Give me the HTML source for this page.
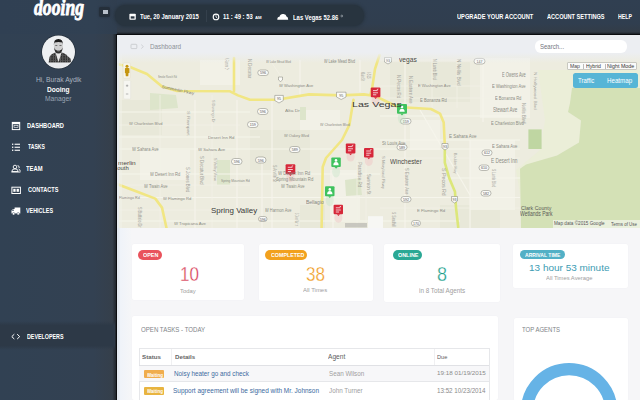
<!DOCTYPE html>
<html><head><meta charset="utf-8"><style>
*{margin:0;padding:0;box-sizing:border-box}
html,body{width:640px;height:400px;overflow:hidden}
body{position:relative;background:#314052;font-family:"Liberation Sans",sans-serif}
.a{position:absolute}
.t{position:absolute;line-height:1;white-space:pre;transform-origin:0 0}

.card{position:absolute;background:#fff;border-radius:2px;box-shadow:0 0 1px 0 #ebebef}
.bd{position:absolute;border-radius:5px;height:9.4px}

</style></head><body>

<!-- header -->
<div class="a" style="left:0;top:0;width:640px;height:400px;background:#303f51"></div>
<div class="a" style="left:0;top:0;width:640px;height:34px;background:linear-gradient(#303f51 0%,#303e4f 70%,#333c47 94%,#1a1e24 100%)"></div>
<div class="a" style="left:0;top:0;width:117px;height:400px;background:linear-gradient(90deg,#314153 0%,#334152 80%,#353f4b 96%,#1a1e24 100%)"></div>
<div class="a" style="left:0;top:0;width:117px;height:34px;background:linear-gradient(90deg,#304053 0%,#314153 80%,#303e4f 100%)"></div>
<div class="a" style="left:115px;top:5px;width:249px;height:21px;background:#28343f;border-radius:10.5px;box-shadow:0 0 3px 1px #28343f"></div>
<div class="a" style="left:206px;top:10px;width:1px;height:12px;background:#34404c"></div>
<div class="a" style="left:99px;top:7px;width:11px;height:10px;background:#252f3a;border-radius:2px;box-shadow:0 0 2px #252f3a"></div>
<div class="a" style="left:102.5px;top:9.5px;width:5.5px;height:4.5px;background:#b8c0ca"></div>
<!-- sidebar -->
<div class="a" style="left:0;top:321px;width:115px;height:29px;background:linear-gradient(rgba(44,56,70,0) 0%,#2d3947 15%,#2d3947 85%,rgba(44,56,70,0) 100%)"></div>
<!-- main -->
<div class="a" style="left:116px;top:34px;width:524px;height:366px;background:#0b0d10"></div>
<div class="a" style="left:117px;top:35px;width:523px;height:365px;background:#f3f4f6"></div>
<div class="a" style="left:117px;top:35px;width:2px;height:365px;background:#e4e9f0"></div>

<svg class="a" style="left:117px;top:35px" width="523" height="193" viewBox="117 35 523 193">
 <rect x="117" y="35" width="523" height="193" fill="#edecdf"/>
 <!-- lighter/darker urban blocks -->
 <g fill="#e8e8d9">
  <rect x="117" y="100" width="45" height="35"/>
  <rect x="250" y="130" width="60" height="40"/>
  <rect x="390" y="62" width="80" height="40"/>
  <rect x="300" y="205" width="25" height="23"/>
  <rect x="440" y="205" width="60" height="23"/>
 </g>
 <g fill="#f2f1e7">
  <rect x="200" y="60" width="40" height="25"/>
  <rect x="330" y="170" width="30" height="50"/>
  <rect x="470" y="140" width="45" height="70"/>
  <rect x="480" y="58" width="50" height="60"/>
  <rect x="140" y="150" width="50" height="30"/>
  <rect x="300" y="110" width="40" height="20"/>
  <rect x="410" y="120" width="30" height="30"/>
 </g>
 <!-- golf / parks -->
 <g fill="#dde5cb">
  <path d="M150,93 L176,95 L178,108 L150,110 Z"/>
  <path d="M300,107 L306,107 L306,120 L300,120 Z"/>
  <path d="M217,160 L230,160 L230,185 L217,185 Z"/>
  <path d="M345,180 L360,178 L362,195 L346,196 Z"/>
 </g>
 <!-- cream transition band -->
 <path d="M538,70 L640,70 L640,88 L572,88 L570,103 L568,112 L581,120.6 L579,142.5 L557,155.6 L526,164.4 L519.7,168.7 L521,200 L516,170 L540,150 L545,120 Z" fill="#ebeed8"/>
 <!-- green park -->
 <path d="M572,88 L640,88 L640,228 L521,228 L520,168.7 L526,164.4 L557,155.6 L579,142.5 L581,120.6 L568,112 L570,103 Z" fill="#d4e1b6"/>
 <rect x="528.4" y="129.4" width="13.2" height="19.6" fill="#bfd6a2"/>
 <!-- minor roads -->
 <g stroke="#f6f5ec" stroke-width="1.1" fill="none">
  <path d="M117,149 L520,149"/>
  <path d="M117,197.5 L520,197.5"/>
  <path d="M117,221 L460,221"/>
  <path d="M117,137 L260,137"/>
  <path d="M262,160 L262,228"/>
  <path d="M333,170 L333,228"/>
  <path d="M483,60 L483,122"/>
  <path d="M237,100 L237,228"/>
  <path d="M272,100 L272,228"/>
  <path d="M195,100 L195,228"/>
  <path d="M380,116 L520,116"/>
  <path d="M380,140 L520,140"/>
  <path d="M440,178 L520,178"/>
  <path d="M420,110 L470,195"/>
  <path d="M405,60 L405,228"/>
  <path d="M470,140 L470,228"/>
  <path d="M117,174 L380,174"/>
  <path d="M300,60 L300,95"/>
  <path d="M360,60 L360,92"/>
  <path d="M117,112 L250,112"/>
 </g>
 <g stroke="#f3f2e8" stroke-width="0.7" fill="none">
  <path d="M117,125 L240,125"/><path d="M117,185 L250,185"/><path d="M380,86 L520,86"/><path d="M380,98 L520,98"/>
  <path d="M380,158 L520,158"/><path d="M380,208 L520,208"/><path d="M160,95 L160,228"/><path d="M212,95 L212,228"/>
  <path d="M357,160 L357,228"/><path d="M366,160 L366,228"/><path d="M432,58 L432,108"/><path d="M457,58 L457,108"/>
  <path d="M270,60 L290,90"/><path d="M380,60 L520,60"/><path d="M117,210 L250,210"/>
 </g>
 <!-- highways -->
 <g stroke="#f1e683" stroke-width="2.6" fill="none" stroke-linejoin="round" stroke-linecap="round">
  <path d="M117,64 L130,67 L147,74 L162,86.5 L177,91 L230,91.3 L238,95.4 L250,99.7 L277,99.7 L309,94.4 L341,95.4 L364,94.4 L375,96 L398,107 L431,109 L440,113.6 L443.7,122.6 L444.8,145"/>
  <path d="M234,58 L234,91"/>
  <path d="M379.5,55 L375,69 L372.4,86.5 L370.6,94"/>
  <path d="M353.5,99.7 L349.3,125.2 L342,140 L326,158 L322.7,167 L321.6,228"/>
  <path d="M117,184 L137.3,191.8 L155.3,198.6 L162,207.6 L166.5,228"/>
 </g>
 <path d="M444.8,145 L444.8,162.5 L449.3,178.3 L455,191.8 L456,207.6 L458.3,228" stroke="#dce77a" stroke-width="2.6" fill="none"/>
 <!-- shields -->
 <g fill="#fbfbf8" stroke="#6f6f68" stroke-width="0.45">
  <rect x="257.5" y="108.5" width="10.5" height="6" rx="3"/>
  <rect x="247.5" y="121.5" width="10.5" height="6" rx="3"/>
  <rect x="289.5" y="146.5" width="10.5" height="6" rx="3"/>
  <rect x="231.5" y="158.5" width="10.5" height="6" rx="3"/>
  <rect x="255.5" y="157" width="10.5" height="6" rx="3"/>
  <rect x="258.5" y="216.5" width="8.5" height="5" rx="2.5"/>
  <rect x="474" y="58.4" width="11" height="5.6" rx="2.8"/>
  <rect x="400.5" y="118.5" width="10.5" height="5.5" rx="2.7"/>
  <rect x="397" y="144.5" width="10" height="5.5" rx="2.7"/>
  <rect x="479" y="165" width="10" height="5.5" rx="2.7"/>
  <rect x="401" y="196.5" width="10" height="5.5" rx="2.7"/>
  <rect x="481" y="190.5" width="10" height="5.5" rx="2.7"/>
  <rect x="411.5" y="220.5" width="9" height="5.5" rx="2.7"/>
  <rect x="257.8" y="70" width="10.6" height="5.5" rx="2.7"/>
  <rect x="482" y="150" width="10" height="5.5" rx="2.7"/>
  <path d="M274.8,95.4 L283.3,95.4 L283.3,100.5 L279,103 L274.8,100.5 Z"/>
  <path d="M336.5,92.2 L346,92.2 L346,97 L341.2,99.5 L336.5,97 Z"/>
  <path d="M384.5,57.5 L391.5,57.5 L391.5,62 L388,64 L384.5,62 Z"/>
  <path d="M442,143.5 L448,143.5 L448,148 L445,150 L442,148 Z"/>
  <path d="M451.5,196.5 L457.5,196.5 L457.5,201 L454.5,203 L451.5,201 Z"/>
  <path d="M278.5,77 L282.5,77 L282.5,80 L280.5,81.5 L278.5,80 Z"/>
 </g>
 <g fill="#555" font-family="Liberation Sans" font-size="3.6" text-anchor="middle">
  <text x="262.8" y="113">596</text><text x="252.8" y="126">159</text><text x="294.8" y="151">589</text>
  <text x="236.8" y="163">596</text><text x="260.8" y="161.5">596</text><text x="262.8" y="220.5">596</text>
  <text x="479.5" y="62.8">147</text><text x="405.8" y="122.8">159</text><text x="402" y="148.8">589</text>
  <text x="484" y="169.3">610</text><text x="406" y="200.8">592</text><text x="486" y="194.8">582</text><text x="416" y="224.8">170</text>
  <text x="263" y="74.3">596</text><text x="487" y="154.3">612</text>
  <text x="279" y="100">95</text><text x="341.2" y="97">95</text><text x="388" y="61.5">93</text><text x="445" y="147.5">93</text><text x="454.5" y="200.5">93</text>
 </g>
 <!-- attribution strip -->
 <rect x="553" y="220" width="87" height="8" fill="#f4f6ee" opacity="0.7"/>
 <rect x="345" y="223" width="22" height="4.5" fill="#b8b8b0" opacity="0.7"/>
 <rect x="368" y="216.2" width="15" height="12" fill="#f7f7f4"/>
 <!-- pegman + zoom -->
 <rect x="117" y="35" width="5" height="193" fill="#f2f2ea" opacity="0.5"/>
 <rect x="123.2" y="63" width="7.1" height="15.2" rx="1" fill="#f7f5ea" stroke="#dedac6" stroke-width="0.4"/>
 <circle cx="127" cy="66.2" r="1.5" fill="#c4950f"/>
 <path d="M124.9,68.3 Q127,67.3 129.4,68.3 L129.4,73 L128.5,73 L128.3,76.2 L125.8,76.2 L125.5,73 L124.9,73 Z" fill="#c4950f"/>
 <rect x="123.6" y="80.5" width="7" height="18.5" rx="1" fill="#f6f6f1" stroke="#e0e0d6" stroke-width="0.4"/>
 <path d="M125.9,85.7 L128.3,85.7 M125.9,94 L128.3,94" stroke="#8c8c8c" stroke-width="0.6"/>
 <path d="M127.1,84.5 L127.1,86.9" stroke="#8c8c8c" stroke-width="0.6"/>
 <!-- halos -->
 <g opacity="0.35">
  <ellipse cx="375.6" cy="100.6" rx="4" ry="5" fill="#f0b8bc"/>
  <ellipse cx="350.6" cy="156.6" rx="4" ry="5" fill="#f0b8bc"/>
  <ellipse cx="368.8" cy="161" rx="4" ry="5" fill="#f0b8bc"/>
  <ellipse cx="290.40000000000003" cy="177.3" rx="4" ry="5" fill="#f0b8bc"/>
  <ellipse cx="338.40000000000003" cy="217.8" rx="4" ry="5" fill="#f0b8bc"/>
  <ellipse cx="401.8" cy="118" rx="4" ry="6" fill="#bfe3c4"/>
  <ellipse cx="336.1" cy="171.5" rx="4" ry="6" fill="#bfe3c4"/>
  <ellipse cx="329.8" cy="200.3" rx="4" ry="6" fill="#bfe3c4"/>
 </g>
 <!-- markers -->
 <g>
  <rect x="370.8" y="87.6" width="9.6" height="9.6" rx="1" fill="#d6283a"/>
  <rect x="345.8" y="143.6" width="9.6" height="9.9" rx="1" fill="#d6283a"/>
  <rect x="364" y="148" width="9.5" height="9.5" rx="1" fill="#d6283a"/>
  <rect x="285.6" y="164.3" width="9.7" height="10" rx="1" fill="#d6283a"/>
  <rect x="333.6" y="204.8" width="9.4" height="9.5" rx="1" fill="#d6283a"/>
  <rect x="397" y="104" width="10" height="9.7" rx="1" fill="#3fc25e"/>
  <rect x="331.3" y="157.5" width="9.5" height="9.5" rx="1" fill="#3fc25e"/>
  <rect x="325" y="186.3" width="9.5" height="10" rx="1" fill="#3fc25e"/>
 </g>
 <g fill="#d6283a">
  <path d="M374,97.2 L375.6,99 L377.2,97.2 Z"/><path d="M349,153.5 L350.6,155.3 L352.2,153.5 Z"/>
  <path d="M367.2,157.5 L368.8,159.3 L370.4,157.5 Z"/><path d="M288.8,174.3 L290.4,176 L292,174.3 Z"/>
  <path d="M336.8,214.3 L338.4,216 L340,214.3 Z"/>
 </g>
 <g fill="#3fc25e">
  <path d="M400.4,113.7 L402,115.5 L403.6,113.7 Z"/><path d="M334.5,167 L336.1,168.8 L337.7,167 Z"/><path d="M328.2,196.3 L329.8,198 L331.4,196.3 Z"/>
 </g>
 <g fill="none" stroke="#fff" stroke-width="0.75">
  <path d="M373.0,90.6 L377.6,90.6 M373.0,92.8 L378.0,92.8 M373.0,94.8 L376.3,94.8 M376.8,89.6 L378.3,89.1"/>
  <path d="M348.0,146.6 L352.6,146.6 M348.0,148.79999999999998 L353.0,148.79999999999998 M348.0,150.79999999999998 L351.3,150.79999999999998 M351.8,145.6 L353.3,145.1"/>
  <path d="M366.2,151 L370.8,151 M366.2,153.2 L371.2,153.2 M366.2,155.2 L369.5,155.2 M370,150 L371.5,149.5"/>
  <path d="M287.8,167.3 L292.40000000000003,167.3 M287.8,169.5 L292.8,169.5 M287.8,171.5 L291.1,171.5 M291.6,166.3 L293.1,165.8"/>
  <path d="M335.8,207.8 L340.40000000000003,207.8 M335.8,210.0 L340.8,210.0 M335.8,212.0 L339.1,212.0 M339.6,206.8 L341.1,206.3"/>
 </g>
 <g fill="#fff">
  <circle cx="402" cy="107" r="1.3"/><path d="M399.3,111.8 Q399.5,108.7 402,108.7 Q404.5,108.7 404.7,111.8 Z"/>
  <circle cx="336" cy="160.4" r="1.3"/><path d="M333.3,165.2 Q333.5,162.1 336,162.1 Q338.5,162.1 338.7,165.2 Z"/>
  <circle cx="329.8" cy="189.4" r="1.3"/><path d="M327.1,194.2 Q327.3,191.1 329.8,191.1 Q332.3,191.1 332.5,194.2 Z"/>
 </g>
 <!-- breadcrumb fade -->
 <defs><linearGradient id="bf" x1="0" y1="0" x2="0" y2="1"><stop offset="0" stop-color="#eceef2"/><stop offset="0.62" stop-color="#eceef2"/><stop offset="1" stop-color="#eceef2" stop-opacity="0"/></linearGradient></defs>
 <rect x="117" y="35" width="523" height="28" fill="url(#bf)"/>
</svg>
<!-- breadcrumb -->
<div class="a" style="left:117px;top:35px;width:1.5px;height:193px;background:#e6ebf1;opacity:0.8"></div>
<svg class="a" style="left:0;top:0" width="640" height="100">
 <rect x="131" y="44.3" width="5.8" height="4.3" rx="0.7" fill="none" stroke="#c4c6ca" stroke-width="0.8"/>
 <path d="M141.2,44.6 L143.4,46.6 L141.2,48.6" fill="none" stroke="#c4c6ca" stroke-width="0.7"/>
</svg>
<div class="a" style="left:535px;top:40.3px;width:92px;height:12.6px;background:#fff;border-radius:6px"></div>
<!-- map controls -->
<div class="a" style="left:567px;top:62px;width:69.5px;height:7.8px;background:#fbfbfa;border:0.6px solid #c8c8c0;border-radius:1px"></div>
<div class="a" style="left:582.5px;top:63.5px;width:0.6px;height:5px;background:#bbb"></div>
<div class="a" style="left:604.5px;top:63.5px;width:0.6px;height:5px;background:#bbb"></div>
<div class="a" style="left:573.1px;top:72.5px;width:65px;height:15.2px;background:#56b5d6;border-radius:2.5px"></div>
<!-- cards -->
<div class="a" style="left:117px;top:228px;width:523px;height:172px;background:#f6f6f8"></div>
<div class="a" style="left:117px;top:228px;width:14px;height:172px;background:linear-gradient(90deg,#e3e9f1 0,#e3e9f1 2px,#eff3f9 3px,#f5f6f8 100%)"></div>
<div class="card" style="left:132px;top:243.5px;width:111.75px;height:56.5px"></div>
<div class="card" style="left:258.75px;top:243.5px;width:113.75px;height:57.5px"></div>
<div class="card" style="left:383.75px;top:243.5px;width:116.25px;height:58px"></div>
<div class="card" style="left:513px;top:244px;width:115px;height:44px"></div>
<div class="bd" style="left:138px;top:250.2px;width:24.1px;background:#e9525c"></div>
<div class="bd" style="left:265.4px;top:250.2px;width:42px;background:#f2a11e"></div>
<div class="bd" style="left:392.9px;top:250.3px;width:29.6px;background:#2aa895"></div>
<div class="bd" style="left:520px;top:250px;width:45px;background:#52b0c6"></div>
<!-- panels -->
<div class="card" style="left:132px;top:316px;width:365.5px;height:84px"></div>
<div class="card" style="left:513.5px;top:317.5px;width:114px;height:83px"></div>
<div class="a" style="left:138.6px;top:348.4px;width:351.6px;height:52px;border:0.7px solid #e6e7ea;border-bottom:none"></div>
<div class="a" style="left:139.4px;top:365.3px;width:350px;height:0.8px;background:#e0e1e5"></div>
<div class="a" style="left:139.4px;top:366px;width:350px;height:15px;background:#f7f7f9"></div>
<div class="a" style="left:139.4px;top:381px;width:350px;height:0.8px;background:#e6e7ea"></div>
<div class="a" style="left:170.5px;top:349px;width:0.7px;height:16px;background:#f0f0f2"></div>
<div class="a" style="left:433.5px;top:349px;width:0.7px;height:16px;background:#f0f0f2"></div>
<div class="a" style="left:143.9px;top:370.3px;width:20.6px;height:7.9px;background:#f0ad4e;border-radius:1px"></div>
<div class="a" style="left:143.9px;top:387.2px;width:20.6px;height:7.5px;background:#e8b440;border-radius:1px"></div>
<svg class="a" style="left:0;top:300px" width="640" height="100" viewBox="0 300 640 100">
 <circle cx="569.1" cy="411.35" r="42.15" fill="none" stroke="#66b3e6" stroke-width="12.2"/>
</svg>

<svg class="a" style="left:0;top:0" width="640" height="400" viewBox="0 0 640 400">
 <!-- avatar -->
 <circle cx="58.5" cy="52" r="17.3" fill="#26313d"/>
 <circle cx="58.5" cy="52" r="16.5" fill="#eceef0"/>
 <clipPath id="av"><circle cx="58.5" cy="52" r="15.8"/></clipPath>
 <g clip-path="url(#av)">
  <rect x="40" y="35" width="40" height="34" fill="#eef0f2"/>
  <pattern id="plaid" width="2.4" height="2.4" patternUnits="userSpaceOnUse"><rect width="2.4" height="2.4" fill="#2b2b2b"/><rect x="0" y="0" width="0.9" height="2.4" fill="#6a6a6a"/><rect x="0" y="0" width="2.4" height="0.7" fill="#555"/></pattern>
  <path d="M48.5,63 L49.5,57 Q51,53.5 55.5,52.5 L61.5,52.5 Q66,53.5 67.5,56 L70.5,58.5 L71.5,63 Z" fill="url(#plaid)"/>
  <path d="M55.5,52.8 L58.5,62 L61.5,52.8 Z" fill="#e6e6e6"/>
  <ellipse cx="58.4" cy="46.6" rx="4.5" ry="6" fill="#cfcfcf"/>
  <path d="M53.8,45 Q53.6,38.8 58.4,38.9 Q63.2,38.8 63,45 L62.3,42.6 Q58.4,41.6 54.5,42.6 Z" fill="#1e1e1e"/>
  <path d="M54.1,47.2 Q54.5,53.6 58.4,53.6 Q62.3,53.6 62.7,47.2 L61.7,49.6 Q58.4,51.6 55.1,49.6 Z" fill="#2e2e2e"/>
  <rect x="55.3" y="45.2" width="2" height="0.8" fill="#555"/><rect x="59.5" y="45.2" width="2" height="0.8" fill="#555"/>
  <path d="M56.8,50.6 Q58.4,51.4 60,50.6" stroke="#ddd" stroke-width="0.5" fill="none"/>
  <rect x="40" y="62.5" width="40" height="8" fill="#e9ebee"/>
 </g>
 <!-- header icons -->
 <rect x="129.4" y="13.8" width="6.4" height="6" rx="0.8" fill="#fff"/>
 <rect x="130.7" y="16.3" width="3.8" height="2.3" fill="#2a3541"/>
 <circle cx="216" cy="16.9" r="2.8" fill="none" stroke="#fff" stroke-width="1.1"/>
 <path d="M216,15.2 L216,17 L217.3,18" fill="none" stroke="#fff" stroke-width="0.8"/>
 <path d="M277.3,19.8 Q277.2,17 279.5,16.8 Q280.3,13.6 283.5,14 Q286.2,14.3 286.5,16.6 Q288.3,16.9 288.2,19.8 Z" fill="#fff"/>
 <circle cx="341.8" cy="16" r="0.9" fill="none" stroke="#cfd4da" stroke-width="0.5"/>
 <!-- sidebar icons -->
 <g fill="none" stroke="#fff" stroke-width="1">
  <rect x="12.3" y="122.4" width="7.4" height="7.2"/>
  <rect x="14" y="125.6" width="4" height="2" stroke-width="0.6"/>
 </g>
 <rect x="12" y="122" width="8" height="2.2" fill="#fff"/>
 <g fill="#fff">
  <rect x="12" y="143.6" width="1.3" height="1.3"/><rect x="14.6" y="143.7" width="5.4" height="1.1"/>
  <rect x="12" y="146.6" width="1.3" height="1.3"/><rect x="14.6" y="146.7" width="5.4" height="1.1"/>
  <rect x="12" y="149.6" width="1.3" height="1.3"/><rect x="14.6" y="149.7" width="5.4" height="1.1"/>
 </g>
 <g fill="none" stroke="#fff" stroke-width="0.9">
  <circle cx="15" cy="167" r="1.8"/>
  <path d="M11.8,171.5 Q12,168.8 15,168.8 Q18,168.8 18.2,171.5 Z"/>
  <path d="M17.6,165.6 Q19.6,165.8 19.2,168 M18.6,169 Q20.2,169.4 20.3,171.5"/>
 </g>
 <rect x="11.4" y="171.6" width="9" height="0.9" fill="#fff"/>
 <rect x="11.9" y="187.2" width="8.5" height="6.3" fill="none" stroke="#fff" stroke-width="1"/>
 <g fill="#fff"><rect x="13.3" y="188.8" width="2.3" height="3"/><rect x="16.6" y="188.8" width="2.3" height="3"/></g>
 <path d="M11.5,213.6 L11.5,210.6 L12.8,208.9 L14.6,208.9 L14.6,207.6 L20.3,207.6 L20.3,213.6 Z" fill="#fff"/>
 <circle cx="13.6" cy="213.8" r="1.25" fill="#fff" stroke="#314154" stroke-width="0.5"/><circle cx="18.2" cy="213.8" r="1.25" fill="#fff" stroke="#314154" stroke-width="0.5"/>
 <rect x="12.2" y="209.6" width="1.6" height="1.2" fill="#314154"/>
 <path d="M14.3,334.2 L11.8,336.6 L14.3,339 M17.2,334.2 L19.7,336.6 L17.2,339" fill="none" stroke="#fff" stroke-width="1"/>
</svg>

<div id="t0" class="t" style="left:33.62px;top:-3.68px;font-size:23.11px;color:#fff;font-weight:bold;font-family:'Liberation Serif',serif;font-style:italic;transform:scaleX(0.764);-webkit-text-stroke:0.9px #fff;">dooing</div>
<div id="t1" class="t" style="left:139.72px;top:13.86px;font-size:6.81px;color:#fff;font-weight:bold;transform:scaleX(0.867);">Tue, 20 January 2015</div>
<div id="t2" class="t" style="left:222.78px;top:13.30px;font-size:7.32px;color:#fff;font-weight:bold;transform:scaleX(0.802);">11 : 49 : 53</div>
<div id="t3" class="t" style="left:254.86px;top:15.93px;font-size:4.10px;color:#fff;font-weight:bold;transform:scaleX(1.051);">AM</div>
<div id="t4" class="t" style="left:293.10px;top:13.71px;font-size:7.03px;color:#fff;font-weight:bold;transform:scaleX(0.841);">Las Vegas 52.86</div>
<div id="t5" class="t" style="left:456.70px;top:14.20px;font-size:6.90px;color:#fff;font-weight:bold;transform:scaleX(0.827);">UPGRADE YOUR ACCOUNT</div>
<div id="t6" class="t" style="left:546.85px;top:14.20px;font-size:6.90px;color:#fff;font-weight:bold;transform:scaleX(0.813);">ACCOUNT SETTINGS</div>
<div id="t7" class="t" style="left:618.36px;top:13.32px;font-size:7.00px;color:#fff;font-weight:bold;transform:scaleX(0.748);">HELP</div>
<div id="t8" class="t" style="left:35.73px;top:76.85px;font-size:6.90px;color:#a9b3bf;transform:scaleX(0.976);">Hi, Burak Aydik</div>
<div id="t9" class="t" style="left:47.30px;top:86.79px;font-size:6.90px;color:#fff;font-weight:bold;transform:scaleX(0.952);">Dooing</div>
<div id="t10" class="t" style="left:45.26px;top:95.54px;font-size:6.90px;color:#9aa5b2;transform:scaleX(0.971);">Manager</div>
<div id="t11" class="t" style="left:27.25px;top:122.20px;font-size:7.04px;color:#fff;font-weight:bold;transform:scaleX(0.809);">DASHBOARD</div>
<div id="t12" class="t" style="left:27.60px;top:142.94px;font-size:7.04px;color:#fff;font-weight:bold;transform:scaleX(0.724);">TASKS</div>
<div id="t13" class="t" style="left:26.42px;top:164.51px;font-size:7.29px;color:#fff;font-weight:bold;transform:scaleX(0.800);">TEAM</div>
<div id="t14" class="t" style="left:27.53px;top:187.08px;font-size:7.18px;color:#fff;font-weight:bold;transform:scaleX(0.773);">CONTACTS</div>
<div id="t15" class="t" style="left:26.43px;top:206.54px;font-size:7.32px;color:#fff;font-weight:bold;transform:scaleX(0.738);">VEHICLES</div>
<div id="t16" class="t" style="left:27.14px;top:332.82px;font-size:7.32px;color:#fff;font-weight:bold;transform:scaleX(0.731);">DEVELOPERS</div>
<div id="t17" class="t" style="left:149.63px;top:43.93px;font-size:6.62px;color:#8d9197;transform:scaleX(0.961);">Dashboard</div>
<div id="t18" class="t" style="left:539.69px;top:43.01px;font-size:7.43px;color:#70757c;transform:scaleX(0.810);">Search...</div>
<div id="t19" class="t" style="left:142.53px;top:253.01px;font-size:5.77px;color:#fff;font-weight:bold;transform:scaleX(0.942);">OPEN</div>
<div id="t20" class="t" style="left:270.57px;top:253.01px;font-size:5.77px;color:#fff;font-weight:bold;transform:scaleX(0.924);">COMPLETED</div>
<div id="t21" class="t" style="left:397.54px;top:253.01px;font-size:5.77px;color:#fff;font-weight:bold;transform:scaleX(0.939);">ONLINE</div>
<div id="t22" class="t" style="left:524.87px;top:253.00px;font-size:5.86px;color:#fff;font-weight:bold;transform:scaleX(0.860);">ARRIVAL TIME</div>
<div id="t23" class="t" style="left:179.65px;top:264.27px;font-size:20.85px;color:#d63a52;transform:scaleX(0.815);-webkit-text-stroke:0.35px #fff;">10</div>
<div id="t24" class="t" style="left:305.55px;top:264.27px;font-size:20.85px;color:#f09a1a;transform:scaleX(0.822);-webkit-text-stroke:0.35px #fff;">38</div>
<div id="t25" class="t" style="left:437.25px;top:264.02px;font-size:20.00px;color:#1d9e8a;transform:scaleX(0.903);-webkit-text-stroke:0.35px #fff;">8</div>
<div id="t26" class="t" style="left:528.68px;top:263.42px;font-size:9.80px;color:#3d9cb3;transform:scaleX(1.019);">13 hour 53 minute</div>
<div id="t27" class="t" style="left:179.90px;top:287.81px;font-size:6.06px;color:#a0a0a0;transform:scaleX(0.972);">Today</div>
<div id="t28" class="t" style="left:302.76px;top:288.32px;font-size:5.81px;color:#a0a0a0;transform:scaleX(1.027);">All Times</div>
<div id="t29" class="t" style="left:418.55px;top:287.84px;font-size:6.49px;color:#a0a0a0;transform:scaleX(0.972);">in 8 Total Agents</div>
<div id="t30" class="t" style="left:545.50px;top:274.53px;font-size:6.06px;color:#a0a0a0;transform:scaleX(0.961);">All Times Average</div>
<div id="t31" class="t" style="left:140.84px;top:326.50px;font-size:6.69px;color:#808488;transform:scaleX(0.912);">OPEN TASKS - TODAY</div>
<div id="t32" class="t" style="left:522.38px;top:325.72px;font-size:7.04px;color:#808488;transform:scaleX(0.853);">TOP AGENTS</div>
<div id="t33" class="t" style="left:142.05px;top:354.05px;font-size:5.99px;color:#666;font-weight:bold;transform:scaleX(1.035);">Status</div>
<div id="t34" class="t" style="left:174.85px;top:355.06px;font-size:5.74px;color:#666;font-weight:bold;transform:scaleX(1.075);">Details</div>
<div id="t35" class="t" style="left:328.35px;top:354.43px;font-size:6.56px;color:#5e5e5e;transform:scaleX(1.006);">Agent</div>
<div id="t36" class="t" style="left:437.29px;top:354.20px;font-size:6.00px;color:#5e5e5e;transform:scaleX(0.933);">Due</div>
<div id="t37" class="t" style="left:174.03px;top:371.22px;font-size:6.70px;color:#3b6aa0;transform:scaleX(0.945);">Noisy heater go and check</div>
<div id="t38" class="t" style="left:172.62px;top:387.58px;font-size:6.49px;color:#3b6aa0;transform:scaleX(0.995);">Support agreement will be signed with Mr. Johnson</div>
<div id="t39" class="t" style="left:328.82px;top:371.19px;font-size:6.62px;color:#a0a0a0;transform:scaleX(0.950);">Sean Wilson</div>
<div id="t40" class="t" style="left:329.02px;top:387.31px;font-size:7.57px;color:#a0a0a0;transform:scaleX(0.833);">John Turner</div>
<div id="t41" class="t" style="left:437.29px;top:370.45px;font-size:6.22px;color:#8a8a8a;transform:scaleX(1.008);">19:18 01/19/2015</div>
<div id="t42" class="t" style="left:437.29px;top:387.55px;font-size:6.89px;color:#8a8a8a;transform:scaleX(0.906);">13:52 10/23/2014</div>
<div id="t43" class="t" style="left:146.50px;top:372.55px;font-size:5.74px;color:#fff;font-weight:bold;transform:scaleX(0.776);">Waiting</div>
<div id="t44" class="t" style="left:146.50px;top:389.34px;font-size:5.53px;color:#fff;font-weight:bold;transform:scaleX(0.806);">Waiting</div>
<div id="t45" class="t" style="left:265.95px;top:60.42px;font-size:4.32px;color:#8c8c84;transform:scaleX(0.689);">W Lake Mead Blvd</div>
<div id="t46" class="t" style="left:323.98px;top:59.24px;font-size:5.14px;color:#8c8c84;transform:scaleX(0.725);">W Lake Mead Blvd</div>
<div id="t47" class="t" style="left:158.38px;top:75.16px;font-size:4.32px;color:#8c8c84;transform:scaleX(0.555);">Smoke Ranch Rd</div>
<div id="t48" class="t" style="left:278.96px;top:85.30px;font-size:3.83px;color:#8c8c84;transform:scaleX(1.064);">W Washington Ave</div>
<div id="t49" class="t" style="left:285.24px;top:109.36px;font-size:4.19px;color:#8c8c84;transform:scaleX(1.161);">Alta Dr</div>
<div id="t50" class="t" style="left:320.46px;top:122.66px;font-size:4.32px;color:#8c8c84;transform:scaleX(0.832);">W Charleston Blvd</div>
<div id="t51" class="t" style="left:129.44px;top:122.47px;font-size:3.92px;color:#8c8c84;transform:scaleX(1.033);">W Charleston Blvd</div>
<div id="t52" class="t" style="left:284.20px;top:135.03px;font-size:3.40px;color:#8c8c84;transform:scaleX(1.164);">W Oakey Blvd</div>
<div id="t53" class="t" style="left:208.15px;top:136.12px;font-size:4.19px;color:#8c8c84;transform:scaleX(1.023);">Desert Inn Rd</div>
<div id="t54" class="t" style="left:131.72px;top:148.31px;font-size:4.59px;color:#8c8c84;transform:scaleX(0.913);">W Sahara Ave</div>
<div id="t55" class="t" style="left:197.96px;top:148.34px;font-size:4.19px;color:#8c8c84;transform:scaleX(1.020);">W Sahara Ave</div>
<div id="t56" class="t" style="left:149.98px;top:171.72px;font-size:5.54px;color:#8c8c84;transform:scaleX(0.741);">W Desert Inn Rd</div>
<div id="t57" class="t" style="left:143.96px;top:184.50px;font-size:4.46px;color:#8c8c84;transform:scaleX(0.918);">W Twain Ave</div>
<div id="t58" class="t" style="left:119.47px;top:196.67px;font-size:3.62px;color:#8c8c84;transform:scaleX(1.017);">Flamingo Rd</div>
<div id="t59" class="t" style="left:162.96px;top:197.59px;font-size:3.09px;color:#8c8c84;transform:scaleX(1.333);">W Flamingo Rd</div>
<div id="t60" class="t" style="left:174.20px;top:223.21px;font-size:3.62px;color:#8c8c84;transform:scaleX(1.175);">W Tropicana Ave</div>
<div id="t61" class="t" style="left:220.59px;top:180.33px;font-size:3.62px;color:#8c8c84;transform:scaleX(0.904);">Spring Mountain Rd</div>
<div id="t62" class="t" style="left:277.98px;top:172.13px;font-size:4.73px;color:#8c8c84;transform:scaleX(0.925);">W Desert Inn Rd</div>
<div id="t63" class="t" style="left:276.29px;top:178.15px;font-size:4.79px;color:#8c8c84;transform:scaleX(0.881);">Spring Mountain Rd</div>
<div id="t64" class="t" style="left:280.96px;top:184.50px;font-size:4.46px;color:#8c8c84;transform:scaleX(0.918);">W Twain Ave</div>
<div id="t65" class="t" style="left:264.94px;top:209.31px;font-size:4.71px;color:#8c8c84;transform:scaleX(0.837);">W Harmon Ave</div>
<div id="t66" class="t" style="left:305.86px;top:199.72px;font-size:5.85px;color:#85857e;transform:scaleX(0.856);">Bellagio</div>
<div id="t67" class="t" style="left:417.95px;top:84.27px;font-size:4.26px;color:#8c8c84;transform:scaleX(0.949);">E Washington Ave</div>
<div id="t68" class="t" style="left:419.66px;top:97.63px;font-size:5.41px;color:#8c8c84;transform:scaleX(0.770);">E Bonanza Rd</div>
<div id="t69" class="t" style="left:449.40px;top:133.15px;font-size:6.08px;color:#8c8c84;transform:scaleX(0.744);">E Sahara Ave</div>
<div id="t70" class="t" style="left:382.06px;top:141.63px;font-size:4.73px;color:#8c8c84;transform:scaleX(0.894);">St Louis Ave</div>
<div id="t71" class="t" style="left:416.67px;top:210.17px;font-size:3.62px;color:#8c8c84;transform:scaleX(1.175);">E Flamingo Rd</div>
<div id="t72" class="t" style="left:501.67px;top:71.95px;font-size:6.34px;color:#8c8c84;transform:scaleX(0.625);">E Owens Ave</div>
<div id="t73" class="t" style="left:491.66px;top:84.92px;font-size:4.47px;color:#8c8c84;transform:scaleX(0.931);">E Washington Ave</div>
<div id="t74" class="t" style="left:495.16px;top:96.37px;font-size:5.95px;color:#8c8c84;transform:scaleX(0.689);">E Bonanza Rd</div>
<div id="t75" class="t" style="left:492.77px;top:106.95px;font-size:6.34px;color:#8c8c84;transform:scaleX(0.719);">Stewart Ave</div>
<div id="t76" class="t" style="left:490.66px;top:120.37px;font-size:6.08px;color:#8c8c84;transform:scaleX(0.674);">E Charleston Blvd</div>
<div id="t77" class="t" style="left:491.66px;top:142.97px;font-size:6.22px;color:#8c8c84;transform:scaleX(0.668);">E Sahara Ave</div>
<div id="t78" class="t" style="left:490.61px;top:158.43px;font-size:6.57px;color:#8c8c84;transform:scaleX(0.725);">E Desert Inn</div>
<div id="t79" class="t" style="left:554.45px;top:221.46px;font-size:5.53px;color:#555;transform:scaleX(0.841);">Map data ©2015 Google</div>
<div id="t80" class="t" style="left:610.63px;top:221.56px;font-size:5.54px;color:#555;transform:scaleX(0.796);">Terms of Use</div>
<div id="t81" class="t" style="left:352.37px;top:101.40px;font-size:7.22px;color:#3a3a38;transform:scaleX(1.475);">Las Vegas</div>
<div id="t82" class="t" style="left:398.76px;top:56.04px;font-size:7.87px;color:#4a4a46;transform:scaleX(0.853);">vegas</div>
<div id="t83" class="t" style="left:211.36px;top:206.64px;font-size:7.87px;color:#3a3a38;transform:scaleX(1.010);">Spring Valley</div>
<div id="t84" class="t" style="left:390.42px;top:158.86px;font-size:6.49px;color:#4a4a46;transform:scaleX(0.979);">Winchester</div>
<div id="t85" class="t" style="left:521.47px;top:206.03px;font-size:5.11px;color:#5a5a56;transform:scaleX(1.026);">Clark County</div>
<div id="t86" class="t" style="left:519.97px;top:211.28px;font-size:6.35px;color:#5a5a56;transform:scaleX(0.791);">Wetlands Park</div>
<div id="t87" class="t" style="left:117.83px;top:159.73px;font-size:6.22px;color:#4a4a46;transform:scaleX(1.048);">merlin</div>
<div id="t88" class="t" style="left:117.25px;top:166.41px;font-size:5.95px;color:#4a4a46;">outh</div>
<div id="t89" class="t" style="left:227.88px;top:58.03px;font-size:4.86px;color:#a2a29a;transform:rotate(90deg) scaleX(0.427);">N Rancho Dr</div>
<div id="t90" class="t" style="left:189.64px;top:111.14px;font-size:3.96px;color:#a2a29a;transform:rotate(90deg) scaleX(1.312);">S Rampart</div>
<div id="t91" class="t" style="left:215.19px;top:99.52px;font-size:3.96px;color:#a2a29a;transform:rotate(90deg) scaleX(0.932);">S Durango Dr</div>
<div id="t92" class="t" style="left:189.18px;top:166.78px;font-size:4.86px;color:#a2a29a;transform:rotate(90deg) scaleX(0.891);">S Jones Blvd</div>
<div id="t93" class="t" style="left:202.68px;top:155.58px;font-size:4.86px;color:#a2a29a;transform:rotate(90deg) scaleX(0.885);">S Decatur Blvd</div>
<div id="t94" class="t" style="left:216.06px;top:157.81px;font-size:3.83px;color:#a2a29a;transform:rotate(90deg) scaleX(0.984);">S Valley View</div>
<div id="t95" class="t" style="left:141.14px;top:207.41px;font-size:4.46px;color:#a2a29a;transform:rotate(90deg) scaleX(0.853);">S Buffalo Dr</div>
<div id="t96" class="t" style="left:251.82px;top:58.95px;font-size:5.14px;color:#a2a29a;transform:rotate(90deg) scaleX(0.844);">N Decatur</div>
<div id="t97" class="t" style="left:364.38px;top:71.79px;font-size:4.86px;color:#a2a29a;transform:rotate(90deg) scaleX(0.529);">Main St</div>
<div id="t98" class="t" style="left:371.02px;top:71.73px;font-size:5.14px;color:#a2a29a;transform:rotate(90deg) scaleX(0.579);">I-515</div>
<div id="t99" class="t" style="left:275.95px;top:164.62px;font-size:4.59px;color:#a2a29a;transform:rotate(90deg) scaleX(0.770);">S Arville St</div>
<div id="t100" class="t" style="left:361.13px;top:162.13px;font-size:4.86px;color:#a2a29a;transform:rotate(90deg) scaleX(0.951);">Paradise Rd</div>
<div id="t101" class="t" style="left:371.36px;top:173.61px;font-size:5.07px;color:#a2a29a;transform:rotate(90deg) scaleX(0.755);">Swenson St</div>
<div id="t102" class="t" style="left:298.08px;top:212.90px;font-size:4.86px;color:#a2a29a;transform:rotate(90deg) scaleX(0.412);">S Dean Martin</div>
<div id="t103" class="t" style="left:399.93px;top:74.95px;font-size:4.86px;color:#a2a29a;transform:rotate(90deg) scaleX(0.891);">N Pecos Rd</div>
<div id="t104" class="t" style="left:412.57px;top:76.05px;font-size:5.14px;color:#a2a29a;transform:rotate(90deg) scaleX(0.840);">N Eastern Ave</div>
<div id="t105" class="t" style="left:435.93px;top:59.21px;font-size:4.86px;color:#a2a29a;transform:rotate(90deg) scaleX(0.748);">N Lamb Blvd</div>
<div id="t106" class="t" style="left:460.18px;top:59.12px;font-size:4.86px;color:#a2a29a;transform:rotate(90deg) scaleX(0.964);">N Nellis Blvd</div>
<div id="t107" class="t" style="left:384.01px;top:155.59px;font-size:3.83px;color:#a2a29a;transform:rotate(90deg) scaleX(1.110);">S Maryland Pkwy</div>
<div id="t108" class="t" style="left:409.11px;top:167.79px;font-size:5.07px;color:#a2a29a;transform:rotate(90deg) scaleX(0.824);">S Eastern Ave</div>
<div id="t109" class="t" style="left:444.93px;top:167.74px;font-size:4.86px;color:#a2a29a;transform:rotate(90deg) scaleX(1.081);">S Pecos Rd</div>
<div id="t110" class="t" style="left:456.06px;top:153.21px;font-size:3.83px;color:#a2a29a;transform:rotate(90deg) scaleX(0.948);">Boulder Hwy</div>
<div id="t111" class="t" style="left:494.58px;top:169.14px;font-size:4.86px;color:#a2a29a;transform:rotate(90deg) scaleX(0.667);">S Lamb Blvd</div>
<div id="t112" class="t" style="left:395.43px;top:211.83px;font-size:4.86px;color:#a2a29a;transform:rotate(90deg) scaleX(0.688);">S Sandhill</div>
<div id="t113" class="t" style="left:536.06px;top:72.11px;font-size:3.83px;color:#a2a29a;transform:rotate(90deg) scaleX(1.263);">N Hollywood Blvd</div>
<div id="t114" class="t" style="left:525.33px;top:102.65px;font-size:4.86px;color:#a2a29a;transform:rotate(90deg) scaleX(0.900);">Nellis Blvd</div>
<div id="t115" class="t" style="left:161.78px;top:85.49px;font-size:4.26px;color:#7a7a72;transform:rotate(12deg) scaleX(1.049);">Summerlin Pkwy</div>
<div id="t116" class="t" style="left:569.70px;top:63.86px;font-size:5.83px;color:#444;transform:scaleX(0.874);">Map</div>
<div id="t117" class="t" style="left:586.21px;top:64.12px;font-size:5.59px;color:#333;transform:scaleX(0.931);">Hybrid</div>
<div id="t118" class="t" style="left:607.21px;top:64.12px;font-size:5.59px;color:#333;transform:scaleX(0.956);">Night Mode</div>
<div id="t119" class="t" style="left:578.20px;top:78.37px;font-size:6.60px;color:#fff;transform:scaleX(0.908);">Traffic</div>
<div id="t120" class="t" style="left:606.97px;top:78.06px;font-size:6.60px;color:#fff;transform:scaleX(0.940);">Heatmap</div>


</body></html>
